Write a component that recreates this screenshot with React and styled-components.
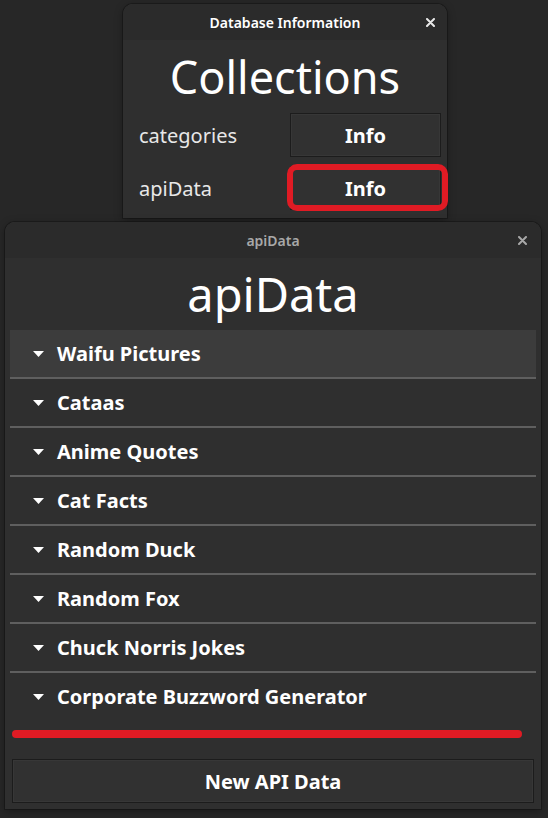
import React from "react";
import styled, { createGlobalStyle } from "styled-components";

const GlobalStyle = createGlobalStyle`
  html, body {
    margin: 0;
    padding: 0;
    background: #272727;
    font-family: "Noto Sans", "Open Sans", sans-serif;
    color: #ffffff;
  }
  #root {
    height: 818px;
    overflow: hidden;
  }
`;

const Page = styled.div`
  display: flex;
  flex-direction: column;
  align-items: flex-start;
`;

const Window = styled.div`
  margin-top: 4px;
  margin-left: ${(p) => p.left}px;
  width: ${(p) => p.width}px;
  background: #2f2f2f;
  border-radius: 10px 10px 0 0;
  box-shadow: 0 0 0 1px rgba(0, 0, 0, 0.25), 0 2px 8px rgba(0, 0, 0, 0.35),
    inset 0 1px 0 rgba(255, 255, 255, 0.06);
  display: flex;
  flex-direction: column;
`;

const TitleBar = styled.div`
  height: 36px;
  background: #2b2b2b;
  border-radius: 10px 10px 0 0;
  display: flex;
  align-items: center;
  justify-content: center;
  position: relative;
  font-size: 14px;
  font-weight: 600;
  color: ${(p) => (p.active ? "#ffffff" : "#a8a8a8")};
`;

const Close = styled.span`
  position: absolute;
  right: ${(p) => p.right}px;
  top: 11px;
  width: 14px;
  height: 14px;
  display: flex;
  align-items: center;
  justify-content: center;
`;

const Heading = styled.h1`
  margin: 0;
  text-align: center;
  font-weight: 400;
  font-size: ${(p) => p.size}px;
  line-height: ${(p) => p.lh}px;
  color: #ffffff;
`;

const InfoGrid = styled.div`
  display: grid;
  grid-template-columns: 1fr 151px;
  row-gap: 9px;
  padding: 0 6px 8px 16px;
  align-items: center;
`;

const Label = styled.span`
  font-size: 20px;
  color: #e8e8e8;
`;

const Button = styled.button`
  position: relative;
  height: 44px;
  width: 100%;
  background: #313131;
  border: 1px solid #1c1c1c;
  box-shadow: inset 0 0 0 1px rgba(255, 255, 255, 0.03);
  color: #ffffff;
  font-family: inherit;
  font-size: 20px;
  font-weight: 700;
  padding: 0;
`;

const Highlight = styled.span`
  position: absolute;
  top: -3px;
  left: -4px;
  right: -8px;
  bottom: -2px;
  border: 6px solid #e01b24;
  border-radius: 10px;
  pointer-events: none;
`;

const List = styled.div`
  margin: 0 5px;
  display: flex;
  flex-direction: column;
`;

const Row = styled.div`
  height: 47px;
  display: flex;
  align-items: center;
  gap: 13px;
  padding-left: 23px;
  background: ${(p) => (p.hover ? "#3c3c3c" : "transparent")};
  border-bottom: ${(p) => (p.last ? "none" : "2px solid #5f5f5f")};
  font-size: 20px;
  font-weight: 700;
  color: #ffffff;
`;

const RedBar = styled.div`
  margin: 10px 19px 0 7px;
  height: 8px;
  background: #e01b24;
  border-radius: 4px;
`;

const BottomButton = styled(Button)`
  margin: 21px 7px 6px 7px;
  width: auto;
`;

const Arrow = () => (
  <svg width="11" height="6" viewBox="0 0 11 6">
    <path d="M0 0 H11 L5.5 6 Z" fill="#ffffff" />
  </svg>
);

const CloseIcon = ({ color }) => (
  <svg width="9" height="9" viewBox="0 0 9 9">
    <path d="M1 1 L8 8 M8 1 L1 8" stroke={color} strokeWidth="2" strokeLinecap="round" />
  </svg>
);

const apis = [
  "Waifu Pictures",
  "Cataas",
  "Anime Quotes",
  "Cat Facts",
  "Random Duck",
  "Random Fox",
  "Chuck Norris Jokes",
  "Corporate Buzzword Generator",
];

export default function App() {
  return (
    <Page>
      <GlobalStyle />
      <Window left={123} width={324}>
        <TitleBar active>
          Database Information
          <Close right={10}>
            <CloseIcon color="#e8e8e8" />
          </Close>
        </TitleBar>
        <Heading size={45} lh={73}>Collections</Heading>
        <InfoGrid>
          <Label>categories</Label>
          <Button>Info</Button>
          <Label>apiData</Label>
          <Button>
            Info
            <Highlight />
          </Button>
        </InfoGrid>
      </Window>

      <Window left={5} width={536}>
        <TitleBar>
          apiData
          <Close right={12}>
            <CloseIcon color="#a8a8a8" />
          </Close>
        </TitleBar>
        <Heading size={47} lh={72}>apiData</Heading>
        <List>
          {apis.map((name, i) => (
            <Row key={name} hover={i === 0} last={i === apis.length - 1}>
              <Arrow />
              {name}
            </Row>
          ))}
        </List>
        <RedBar />
        <BottomButton>New API Data</BottomButton>
      </Window>
    </Page>
  );
}
